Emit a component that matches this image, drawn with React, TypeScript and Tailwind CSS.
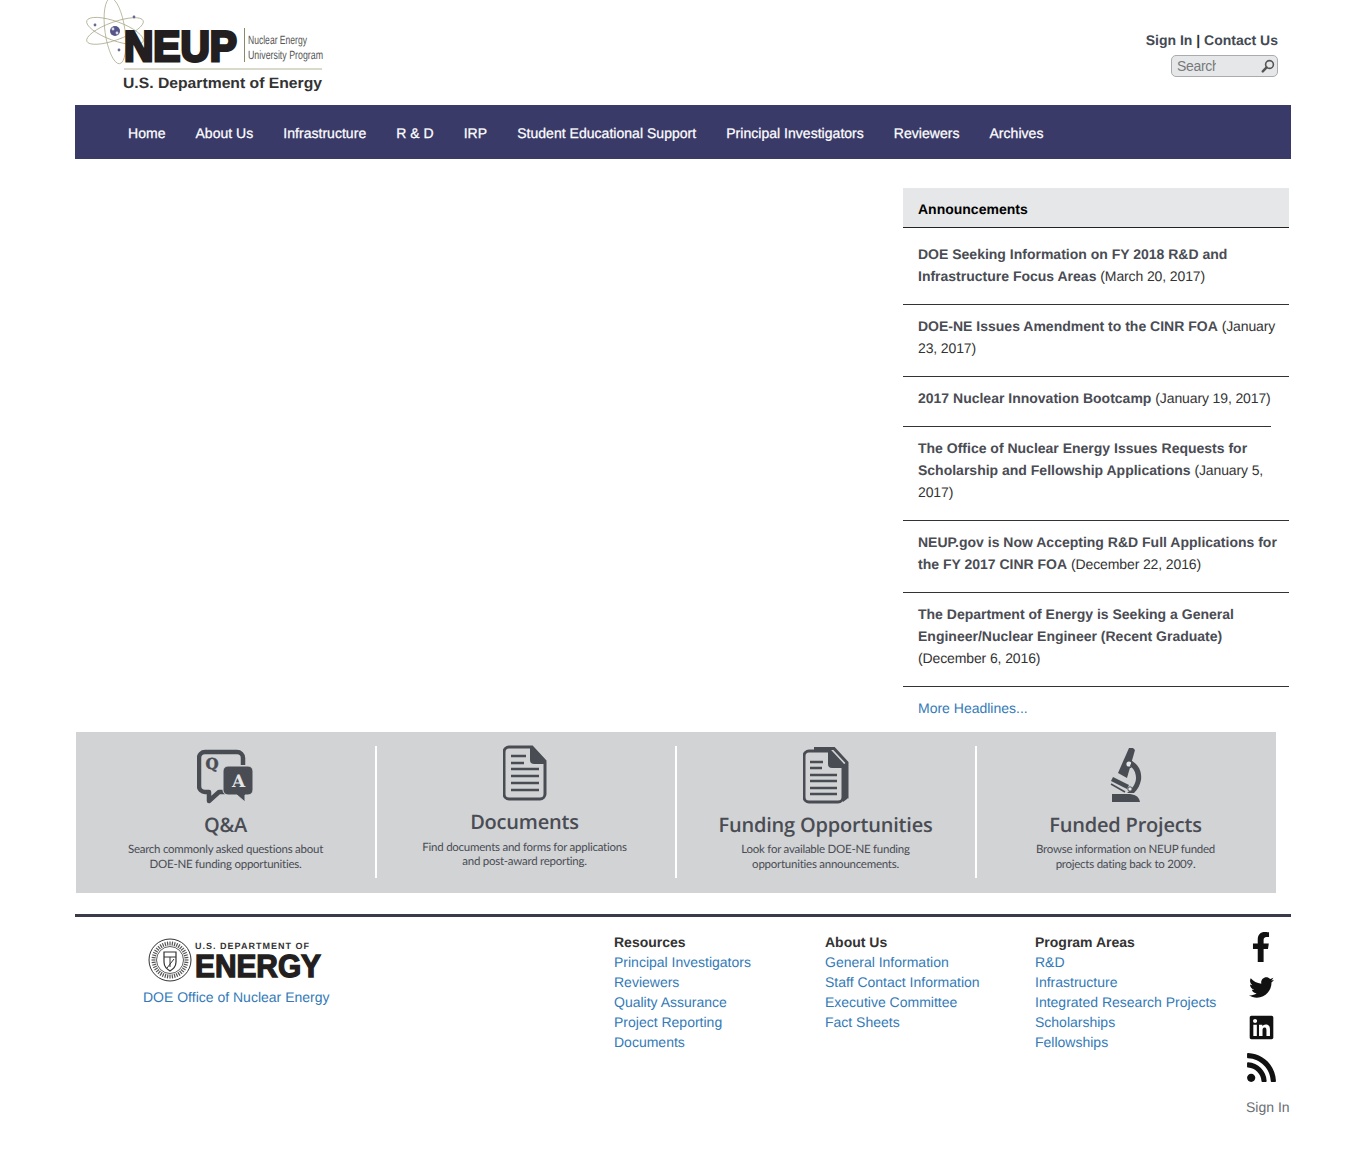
import React from "react";
import { FaFacebookF, FaTwitter, FaLinkedin, FaRss } from "react-icons/fa";

const INK = "#4a4c54";
const BAND = "#d1d3d4";

function NeupLogo() {
  return (
    <svg width="300" height="100" viewBox="0 0 300 100" className="block shrink-0">
      <g fill="none" stroke="#a3a384" strokeWidth="0.7">
        <ellipse cx="40" cy="31" rx="10" ry="33" transform="rotate(-8 40 31)" />
        <ellipse cx="40" cy="31" rx="30" ry="9.5" transform="rotate(20 40 31)" />
        <ellipse cx="40" cy="31" rx="30" ry="9" transform="rotate(-20 40 31)" />
      </g>
      <circle cx="40" cy="31" r="5" fill="#55558a" />
      <circle cx="38" cy="29" r="1.4" fill="#d8d8e8" />
      <circle cx="42" cy="33" r="1.4" fill="#d8d8e8" />
      <circle cx="20" cy="25" r="1.4" fill="#6a6a8a" />
      <circle cx="59" cy="17" r="1.4" fill="#6a6a8a" />
      <circle cx="44" cy="50" r="1.4" fill="#6a6a8a" />
      <text x="49" y="60.5" textLength="113" lengthAdjust="spacingAndGlyphs" fontFamily="'Liberation Sans', sans-serif" fontWeight="700" fontSize="43" fill="#231f20" stroke="#231f20" strokeWidth="3">NEUP</text>
      <rect x="169" y="28" width="1" height="34" fill="#8a8a68" />
      <text x="173" y="44" textLength="59" lengthAdjust="spacingAndGlyphs" fontFamily="'Liberation Sans', sans-serif" fontSize="12" fill="#555">Nuclear Energy</text>
      <text x="173" y="59" textLength="75" lengthAdjust="spacingAndGlyphs" fontFamily="'Liberation Sans', sans-serif" fontSize="12" fill="#555">University Program</text>
      <rect x="49" y="68.5" width="198" height="1" fill="#b5b59a" />
      <text x="48" y="88" textLength="199" lengthAdjust="spacingAndGlyphs" fontFamily="'Liberation Sans', sans-serif" fontWeight="700" fontSize="15" fill="#333">U.S. Department of Energy</text>
    </svg>
  );
}

function SearchGlass() {
  return (
    <svg width="14" height="14" viewBox="0 0 14 14" fill="none" stroke="#555" className="block">
      <circle cx="8.5" cy="5.5" r="3.9" strokeWidth="1.6" />
      <path d="M5.6 8.4 1.8 12.4" strokeWidth="2.4" strokeLinecap="round" />
    </svg>
  );
}

function QaIcon() {
  return (
    <svg width="57" height="55" viewBox="0 0 57 55" className="block">
      <path d="M46 16V9a6 6 0 0 0-6-6H8a6 6 0 0 0-6 6v28a6 6 0 0 0 6 6h4v9l10-9h6" fill="none" stroke={INK} strokeWidth="4.5" strokeLinejoin="round" />
      <path d="M31 17h20a5 5 0 0 1 5 5v19a5 5 0 0 1-5 5h-3v7l-8-7H31a5 5 0 0 1-5-5V22a5 5 0 0 1 5-5Z" fill={INK} stroke={BAND} strokeWidth="1" />
      <text x="15" y="20" textAnchor="middle" fontFamily="'DejaVu Serif', serif" fontWeight="700" fontSize="15" fill={INK} stroke={INK} strokeWidth="0.5">Q</text>
      <text x="41.5" y="38" textAnchor="middle" fontFamily="'DejaVu Serif', serif" fontWeight="700" fontSize="17" fill="#e4e5e6">A</text>
    </svg>
  );
}

function DocIcon() {
  return (
    <svg width="44" height="56" viewBox="0 0 44 56" className="block -mt-px">
      <path d="M6 2h23l13 14v33a5 5 0 0 1-5 5H6a5 5 0 0 1-5-5V7a5 5 0 0 1 5-5Z" fill="none" stroke={INK} strokeWidth="3" />
      <path d="M27 1h2l14 15v3H31a4 4 0 0 1-4-4Z" fill={INK} />
      <g stroke={INK} strokeWidth="2.4">
        <path d="M8 11h15M8 18h13M8 24h28M8 31h28M8 38h28M8 45h28" />
      </g>
    </svg>
  );
}

function StackIcon() {
  return (
    <svg width="46" height="57" viewBox="0 0 46 57" className="block">
      <path d="M11 1.5h20l13 14v36" fill="none" stroke={INK} strokeWidth="3" />
      <path d="M44 15v37l-4 3V18Z" fill={INK} />
      <path d="M6 4h21l13 14v32a5 5 0 0 1-5 5H6a5 5 0 0 1-5-5V9a5 5 0 0 1 5-5Z" fill={BAND} stroke={INK} strokeWidth="3" />
      <path d="M25 3h2l14 15v3H29a4 4 0 0 1-4-4Z" fill={INK} />
      <g stroke={INK} strokeWidth="2.4">
        <path d="M7 15h13M7 21h12M7 28h27M7 34h27M7 41h27M7 47h27" />
      </g>
    </svg>
  );
}

function MicroscopeIcon() {
  return (
    <svg width="32" height="54" viewBox="0 0 32 54" className="block">
      <path d="M19 0h4l2 2-8 28-9-5Z" fill={INK} />
      <circle cx="19" cy="16" r="3.4" fill="#e4e5e6" stroke={INK} strokeWidth="1.6" />
      <path d="M22 13c7 4 10 11 9 19-1 5-3 9-7 13h-7c5-4 9-9 9-15 0-6-3-10-6-12Z" fill={INK} />
      <path d="M2 31 18 39" stroke={INK} strokeWidth="4.5" />
      <path d="M1 36l14 8" stroke={INK} strokeWidth="1.6" />
      <path d="M2 46h16c6 0 11 2 12 8H2Z" fill={INK} />
      <circle cx="20" cy="41" r="2.2" fill="#e4e5e6" stroke={INK} strokeWidth="1" />
    </svg>
  );
}

function DoeLogo() {
  const ticks = Array.from({ length: 44 }, (_, i) => i);
  return (
    <svg width="192" height="48" viewBox="0 0 192 48" className="block">
      <circle cx="23" cy="23" r="21" fill="none" stroke="#333" strokeWidth="1" />
      <circle cx="23" cy="23" r="13.5" fill="none" stroke="#333" strokeWidth="0.8" />
      <g stroke="#555" strokeWidth="1.2">
        {ticks.map((i) => (
          <line key={i} x1="23" y1="4.5" x2="23" y2="8.5" transform={`rotate(${(i * 360) / 44} 23 23)`} />
        ))}
      </g>
      <path d="M17 15h12v10c0 5-3 7-6 9-3-2-6-4-6-9Z" fill="none" stroke="#333" strokeWidth="1.2" />
      <path d="M17 20h12M23 20v10M20 31l7-9" stroke="#333" strokeWidth="1" fill="none" />
      <text x="48" y="11.5" textLength="114" lengthAdjust="spacing" fontFamily="'Liberation Sans', sans-serif" fontWeight="700" fontSize="9" fill="#333">U.S. DEPARTMENT OF</text>
      <text x="48" y="40" textLength="126" lengthAdjust="spacingAndGlyphs" fontFamily="'Liberation Sans', sans-serif" fontWeight="700" fontSize="32" fill="#231f20" stroke="#231f20" strokeWidth="1.4">ENERGY</text>
    </svg>
  );
}

const nav = ["Home", "About Us", "Infrastructure", "R & D", "IRP", "Student Educational Support", "Principal Investigators", "Reviewers", "Archives"];

const news = [
  { lines: "DOE Seeking Information on FY 2018 R&D and Infrastructure Focus Areas", date: "(March 20, 2017)", cls: "w-full pt-[15px] pb-[17px] pr-[10px]" },
  { lines: "DOE-NE Issues Amendment to the CINR FOA", date: "(January 23, 2017)", cls: "w-full pt-[10px] pb-[17px] pr-[10px]" },
  { lines: "2017 Nuclear Innovation Bootcamp", date: "(January 19, 2017)", cls: "w-[368px] whitespace-nowrap pt-[10px] pb-[17px]" },
  { lines: "The Office of Nuclear Energy Issues Requests for Scholarship and Fellowship Applications", date: "(January 5, 2017)", cls: "w-full pt-[10px] pb-[17px] pr-[24px]" },
  { lines: "NEUP.gov is Now Accepting R&D Full Applications for the FY 2017 CINR FOA", date: "(December 22, 2016)", cls: "w-full pt-[10px] pb-[17px] pr-[10px]" },
  { lines: "The Department of Energy is Seeking a General Engineer/Nuclear Engineer (Recent Graduate)", date: "(December 6, 2016)", cls: "w-full pt-[10px] pb-[17px] pr-[40px]" },
];

const tiles = [
  { title: "Q&A", a: "Search commonly asked questions about", b: "DOE-NE funding opportunities.", icon: <QaIcon />, cell: "w-[301px] border-r-2 border-white pt-[3px]", iconH: "h-[65px]", desc: "mt-[6px] leading-[15px]" },
  { title: "Documents", a: "Find documents and forms for applications", b: "and post-award reporting.", icon: <DocIcon />, cell: "w-[300px] border-r-2 border-white pr-[3px] pt-0", iconH: "h-[65px]", desc: "mt-[8px] leading-[14px]" },
  { title: "Funding Opportunities", a: "Look for available DOE-NE funding", b: "opportunities announcements.", icon: <StackIcon />, cell: "w-[300px] border-r-2 border-white pr-[1px] pt-[1px]", iconH: "h-[67px]", desc: "mt-[6px] leading-[15px]" },
  { title: "Funded Projects", a: "Browse information on NEUP funded", b: "projects dating back to 2009.", icon: <MicroscopeIcon />, cell: "w-[299px] pr-[2px] pt-[2px]", iconH: "h-[66px]", desc: "mt-[6px] leading-[15px]" },
];

const cols = [
  { head: "Resources", w: "w-[211px]", items: ["Principal Investigators", "Reviewers", "Quality Assurance", "Project Reporting", "Documents"] },
  { head: "About Us", w: "w-[210px]", items: ["General Information", "Staff Contact Information", "Executive Committee", "Fact Sheets"] },
  { head: "Program Areas", w: "w-[211px]", items: ["R&D", "Infrastructure", "Integrated Research Projects", "Scholarships", "Fellowships"] },
];

export default function App() {
  return (
    <div className="mx-auto h-[1169px] w-[1216px] bg-white font-['Liberation_Sans',Arial,sans-serif] text-[14px] text-[#333] antialiased [text-rendering:geometricPrecision]">
      <header className="flex h-[105px] justify-between">
        <NeupLogo />
        <div className="flex flex-col items-end pr-[13px] pt-[32px]">
          <div className="text-[14px] leading-[16px] font-bold text-[#444a54]">
            Sign In <span className="font-bold text-[#333]">|</span> Contact Us
          </div>
          <div className="mt-[7px] flex h-[22px] w-[107px] items-center justify-between rounded-[5px] border border-[#a9abae] bg-[#e6e7e8] pl-[5px] pr-[2px]">
            <input
              readOnly
              placeholder="Search"
              className="w-[39px] bg-transparent text-[14px] tracking-[-0.3px] outline-none placeholder:text-[#77797c]"
            />
            <SearchGlass />
          </div>
        </div>
      </header>

      <nav className="flex h-[54px] items-center gap-[30px] bg-[#3a3a69] pl-[53px] pt-[2px] text-[14px] tracking-[0.03px] text-white [-webkit-text-stroke:0.25px_white]">
        {nav.map((n) => (
          <a key={n} className="whitespace-nowrap">{n}</a>
        ))}
      </nav>

      <main className="flex justify-end pr-[2px] pt-[29px]">
        <section className="w-[386px]">
          <h2 className="flex h-[40px] items-center border-b border-[#222] bg-[#e6e7e8] pl-[15px] pt-[4px] text-[14px] font-bold text-black">Announcements</h2>
          {news.map((n) => (
            <div key={n.lines} className={`${n.cls} border-b border-[#333] pl-[15px] leading-[22px] text-[#333]`}>
              <span className="font-bold text-[#4a4c54]">{n.lines}</span> <span className="tracking-[-0.12px]">{n.date}</span>
            </div>
          ))}
          <div className="pl-[15px] pt-[11px] leading-[20px] text-[#337ab7]">More Headlines...</div>
        </section>
      </main>

      <section className="ml-px mt-[14px] flex h-[161px] w-[1200px] bg-[#d1d3d4] pb-[15px] pt-[14px]">
        {tiles.map((t) => (
          <div key={t.title} className={`flex flex-col items-center ${t.cell}`}>
            <div className={`flex ${t.iconH} items-start justify-center`}>{t.icon}</div>
            <div className="font-['Open_Sans',sans-serif] text-[20px] leading-[22px] font-semibold tracking-[-0.2px] text-[#4a4c54]">{t.title}</div>
            <div className={`${t.desc} text-center font-['Lato',sans-serif] text-[11.5px] tracking-[-0.25px] text-[#4a4c54]`}>
              <div>{t.a}</div>
              <div>{t.b}</div>
            </div>
          </div>
        ))}
      </section>

      <footer className="mt-[21px] flex border-t-[3px] border-[#3a3a4a] pt-[15px]">
        <div className="w-[539px] pl-[68px]">
          <div className="ml-[4px] mt-[5px] w-[192px]"><DoeLogo /></div>
          <div className="mt-[2px] leading-[20px] text-[#337ab7]">DOE Office of Nuclear Energy</div>
        </div>
        {cols.map((c) => (
          <div key={c.head} className={`${c.w} leading-[20px]`}>
            <div className="font-bold text-[#333]">{c.head}</div>
            {c.items.map((i) => (
              <div key={i} className="text-[#337ab7]">{i}</div>
            ))}
          </div>
        ))}
        <div className="-mt-[5px] w-[44px]">
          <div className="flex w-[30px] flex-col items-center">
            <div className="flex h-[40px] items-center"><FaFacebookF size={30} color="#111" /></div>
            <div className="flex h-[40px] items-center"><FaTwitter size={25} color="#111" /></div>
            <div className="flex h-[40px] items-center"><FaLinkedin size={27} color="#111" /></div>
            <div className="flex h-[41px] items-center"><FaRss size={33} color="#111" /></div>
          </div>
          <div className="mt-[9px] leading-[20px] text-[#6b6e73]">Sign In</div>
        </div>
      </footer>
    </div>
  );
}
